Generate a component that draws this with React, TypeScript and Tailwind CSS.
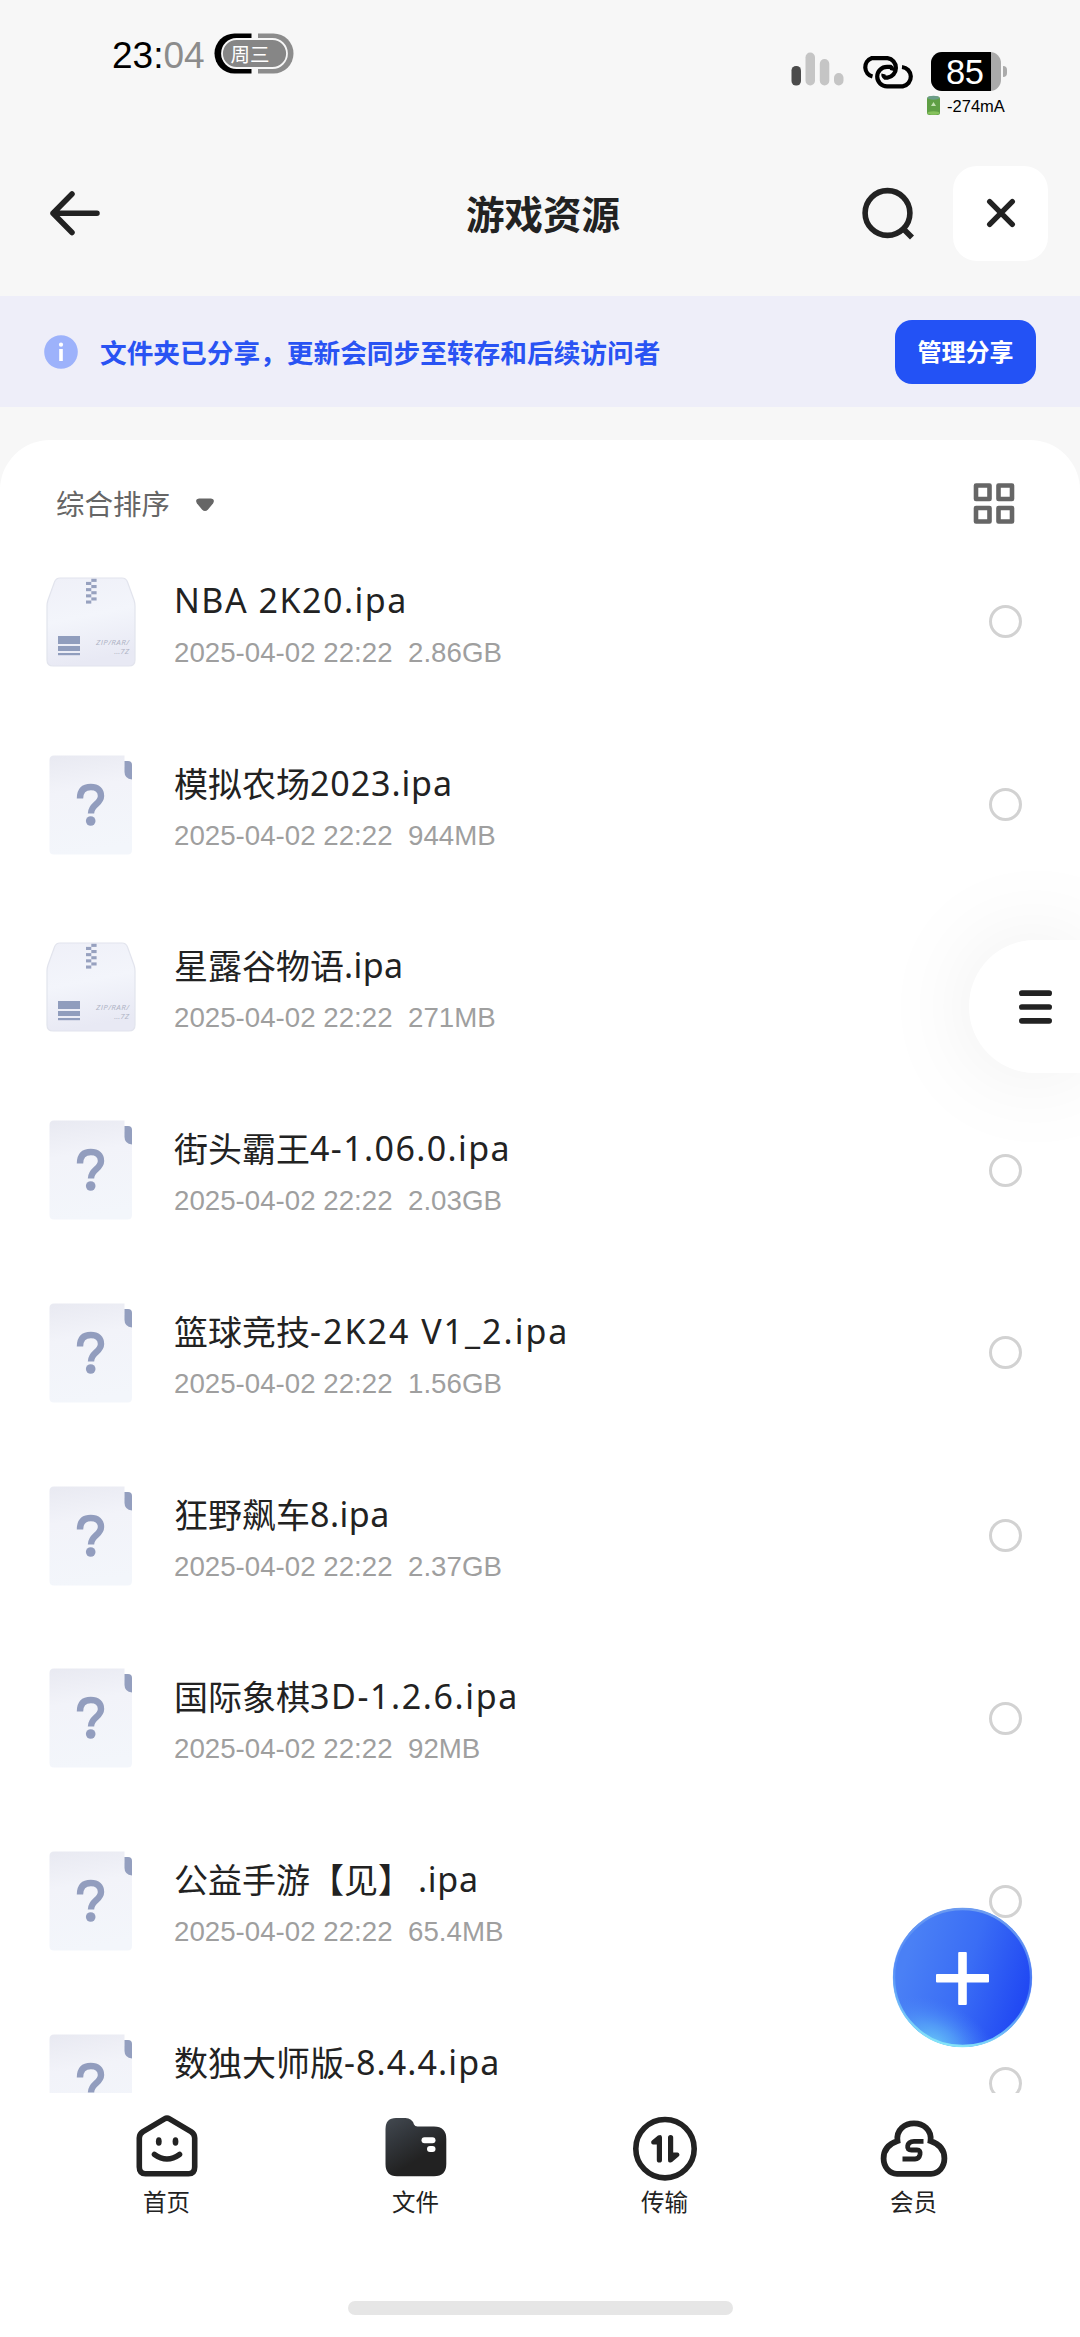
import React from "react";

type FileItem = { kind: "zip" | "unknown"; name: string; size: string; track: number; gap?: number };

const files: FileItem[] = [
  { kind: "zip", name: "NBA 2K20.ipa", size: "2.86GB", track: 1.5 },
  { kind: "unknown", name: "模拟农场2023.ipa", size: "944MB", track: 0.9 },
  { kind: "zip", name: "星露谷物语.ipa", size: "271MB", track: 0.4 },
  { kind: "unknown", name: "街头霸王4-1.06.0.ipa", size: "2.03GB", track: 1.4 },
  { kind: "unknown", name: "篮球竞技-2K24 V1_2.ipa", size: "1.56GB", track: 2 },
  { kind: "unknown", name: "狂野飙车8.ipa", size: "2.37GB", track: 0.5 },
  { kind: "unknown", name: "国际象棋3D-1.2.6.ipa", size: "92MB", track: 1.6 },
  { kind: "unknown", name: "公益手游【见】.ipa", size: "65.4MB", track: 0.7, gap: 6 },
  { kind: "unknown", name: "数独大师版-8.4.4.ipa", size: "", track: 1.1 },
];

function ZipIcon() {
  const teeth = [0, 1, 2, 3, 4, 5, 6, 7];
  return (
    <svg width="90" height="90" viewBox="0 0 90 90">
      <defs>
        <linearGradient id="zipBody" x1="0" y1="0" x2="0.2" y2="1">
          <stop offset="0" stopColor="#eff0f8" />
          <stop offset="0.5" stopColor="#f3f5fb" />
          <stop offset="1" stopColor="#e8e9f4" />
        </linearGradient>
      </defs>
      <path
        d="M14 1H76Q80 1 81.500 5L88 23Q89 26 89 29V83Q89 89 83 89H7Q1 89 1 83V29Q1 26 2 23L8.500 5Q10 1 14 1Z"
        fill="url(#zipBody)"
        stroke="#e2e4ed"
        strokeWidth="1.200"
      />
      {teeth.map((i) => (
        <rect key={i} x={i % 2 ? 40 : 45.3} y={1.8 + i * 3.1} width="5.300" height="3.100" fill="#97a1bf" />
      ))}
      <rect x="12" y="59" width="22" height="8" fill="#909dbd" />
      <rect x="12" y="69" width="22" height="5" fill="#909dbd" />
      <rect x="12" y="76" width="22" height="2.200" fill="#909dbd" />
      <text x="83" y="68" textAnchor="end" textLength="33" fontFamily="Open Sans, sans-serif" fontSize="8" fontStyle="italic" fill="#aeb3c4">
        ZIP/RAR/
      </text>
      <text x="83" y="77" textAnchor="end" fontFamily="Open Sans, sans-serif" fontSize="8" fontStyle="italic" fill="#aeb3c4">
        ...7Z
      </text>
    </svg>
  );
}

function UnknownIcon() {
  return (
    <svg width="84" height="100" viewBox="0 0 84 100">
      <defs>
        <linearGradient id="docBody" x1="0.200" y1="0" x2="0.350" y2="1">
          <stop offset="0" stopColor="#e9eaf2" />
          <stop offset="0.350" stopColor="#f2f3f9" />
          <stop offset="1" stopColor="#f3f6fb" />
        </linearGradient>
      </defs>
      <path d="M5 0.500H75.500V12H83V95Q83 99.500 78.500 99.500H5Q0.500 99.500 0.500 95V5Q0.500 0.500 5 0.500Z" fill="url(#docBody)" />
      <path d="M75.500 6H79Q83 6 83 10V24.500Q75.500 23.500 75.500 17Z" fill="#949fbf" />
      <path
        d="M31 43.500C31 35.500 35 32 41.800 32C48.500 32 52 35.500 52 41C52 49 42 49.500 42 58.500"
        fill="none"
        stroke="#929dbe"
        strokeWidth="6.400"
      />
      <circle cx="41.700" cy="66" r="4.800" fill="#929dbe" />
    </svg>
  );
}

function StatusBar() {
  return (
    <div className="flex h-[130px] shrink-0 items-start pl-[112px]">
      <div className="mt-[35px] flex h-[42px] items-center text-[37px] leading-[42px] text-black">
        <span>23:</span>
        <span className="text-[#8c8c8c]">04</span>
      </div>
      <div className="relative ml-[9px] mt-[33px] h-[41px] w-[80px]">
        <svg width="80" height="41" viewBox="0 0 80 41">
          <path d="M37.500 0.500H20.500A20 20 0 0 0 20.500 40.500H37.500Z" fill="#000" />
          <path d="M44 0.500H59.500A20 20 0 0 1 59.500 40.500H44Z" fill="#8c8c8c" />
          <rect x="8" y="6" width="65" height="29" rx="14.500" fill="#868686" stroke="#f7f7f7" strokeWidth="1.800" />
        </svg>
        <span className="absolute left-[17px] top-[5px] font-['Noto_Sans_CJK_SC',sans-serif] text-[19.500px] leading-[31px] text-white">周三</span>
      </div>
      <svg className="ml-[497px] mt-[51px]" width="54" height="36" viewBox="0 0 54 36">
        <rect x="0.500" y="15" width="9.500" height="19.500" rx="4.500" fill="#4b4b4b" />
        <rect x="14.500" y="1.500" width="9.500" height="33" rx="4.700" fill="#c5c5c5" />
        <rect x="28.800" y="8" width="9.500" height="26.500" rx="4.700" fill="#c5c5c5" />
        <rect x="43" y="22" width="9.500" height="12.500" rx="4.700" fill="#c5c5c5" />
      </svg>
      <svg className="ml-[14px] mt-[55px]" width="57" height="34" viewBox="0 0 57 34" fill="none" stroke="#000" strokeWidth="4.200">
        <path d="M13.500 21.500A9.600 9.600 0 0 1 12.500 3.200H28.500A9.800 9.800 0 0 1 28.500 22.600H26A3.500 3.500 0 0 1 24.500 19" />
        <path d="M43 12A9.800 9.800 0 0 1 43.700 31.400H28A9.800 9.800 0 0 1 28 11.800H31.500A3.500 3.500 0 0 1 33 15.500" />
      </svg>
      <div className="ml-[10px] mt-[52px] flex w-[86px] flex-col">
        <div className="flex items-center">
          <div className="ml-[5.500px] flex h-[39px] w-[70px] overflow-hidden rounded-[11px] bg-[#ababab]">
            <div className="h-full w-[60px] bg-black pl-[15px] text-[34.500px] leading-[41px] text-white">
              <span className="tracking-[-0.600px]">85</span>
            </div>
          </div>
          <div className="ml-[2px] h-[11px] w-[4px] rounded-r-full bg-[#ababab]" />
        </div>
        <div className="mt-[4px] flex items-center">
          <svg width="15" height="21" viewBox="0 0 15 21">
            <rect x="1" y="1.500" width="13" height="18.500" rx="2.500" fill="#5f9f45" />
            <ellipse cx="7.500" cy="2.700" rx="6" ry="2" fill="#6b9c88" />
            <ellipse cx="7.500" cy="18" rx="6" ry="1.700" fill="#86c25c" />
            <path d="M7.500 7L10 11H5Z" fill="#c3e2b2" />
          </svg>
          <span className="ml-[6.500px] whitespace-nowrap text-[16.500px] leading-[20px] text-black">-274mA</span>
        </div>
      </div>
    </div>
  );
}

function Header() {
  return (
    <div className="grid h-[166px] shrink-0 grid-cols-[1fr_auto_1fr] items-center">
      <div className="flex items-center pl-[48px]">
        <svg width="54" height="50" viewBox="0 0 54 50" fill="none" stroke="#222" strokeWidth="5.500" strokeLinecap="round" strokeLinejoin="round">
          <path d="M49 25.300H5M24 6L5 25.300L24 44.500" />
        </svg>
      </div>
      <div className="pb-[3px] pl-[6px] font-['Noto_Sans_CJK_SC',sans-serif] text-[38.500px] font-bold leading-[50px] text-[#222]">游戏资源</div>
      <div className="flex items-center justify-end pr-[32px]">
        <svg className="mr-[37px]" width="56" height="56" viewBox="0 0 56 56" fill="none" stroke="#222" strokeWidth="5.600">
          <circle cx="27.500" cy="28" r="22.400" />
          <path d="M43 43.500L52 52.500" />
        </svg>
        <button className="flex h-[95px] w-[95px] items-center justify-center rounded-[24px] bg-white">
          <svg width="32" height="32" viewBox="0 0 32 32" stroke="#222" strokeWidth="5.400" strokeLinecap="round">
            <path d="M4.700 4.700L27.300 27.300M27.300 4.700L4.700 27.300" />
          </svg>
        </button>
      </div>
    </div>
  );
}

function Banner() {
  return (
    <div className="flex h-[111px] shrink-0 items-center bg-[#eeeef9] pl-[44px] pr-[44px]">
      <svg width="34" height="34" viewBox="0 0 34 34">
        <circle cx="17" cy="17" r="16.800" fill="#9db2fb" />
        <circle cx="17" cy="9.700" r="2.100" fill="#fff" />
        <rect x="15.200" y="14" width="3.600" height="12" fill="#fff" />
      </svg>
      <span className="ml-[22px] flex-1 whitespace-nowrap font-['Noto_Sans_CJK_SC',sans-serif] text-[26.700px] font-bold leading-[40px] text-[#2953f3]">
        文件夹已分享，更新会同步至转存和后续访问者
      </span>
      <button className="flex h-[64px] w-[141px] items-center justify-center rounded-[17px] bg-[#2352f5] pb-[1px] font-['Noto_Sans_CJK_SC',sans-serif] text-[24px] font-bold leading-[36px] text-white">
        管理分享
      </button>
    </div>
  );
}

// Splits a name into CJK runs and Latin runs so each gets its own face and spacing.
function FileName({ file }: { file: FileItem }) {
  const runs = file.name.match(/[\u3000-\u9fff]+|[^\u3000-\u9fff]+/g) ?? [];
  return (
    <div className="flex h-[48px] items-center whitespace-pre text-[34px] text-[#222]">
      {runs.map((run, i) =>
        /[\u3000-\u9fff]/.test(run) ? (
          <span key={i} className="font-['Noto_Sans_CJK_SC',sans-serif] leading-[48px]">{run}</span>
        ) : (
          <span
            key={i}
            className="font-['Noto_Sans',sans-serif] leading-[48px]"
            style={{ letterSpacing: file.track, marginLeft: file.gap ?? 0 }}
          >
            {run}
          </span>
        )
      )}
    </div>
  );
}

function FileRow({ file }: { file: FileItem }) {
  return (
    <div className="flex h-[182.750px] shrink-0 items-center pl-[46px] pr-[58px]">
      <div className="flex w-[90px] justify-center">{file.kind === "zip" ? <ZipIcon /> : <UnknownIcon />}</div>
      <div className="ml-[38px] flex flex-1 flex-col pt-[2px]">
        <FileName file={file} />
        <div className="mt-[12px] h-[34px] whitespace-pre text-[27.700px] leading-[34px] text-[#9f9f9f]">
          {file.size && "2025-04-02 22:22  " + file.size}
        </div>
      </div>
      <div className="h-[33px] w-[33px] rounded-full border-[3px] border-[#d2d2d2]" />
    </div>
  );
}

const HomeIcon = () => (
  <svg width="66" height="66" viewBox="0 0 66 66" fill="none" stroke="#222" strokeWidth="5.600" strokeLinecap="round" strokeLinejoin="round">
    <path d="M30.500 5.800Q33 4.300 35.500 5.800L57 18.600Q60.700 21 60.700 25V54Q60.700 60.700 54.500 60.700H11.500Q5.300 60.700 5.300 54V25Q5.300 21 9 18.600Z" />
    <path d="M20.500 41.500Q33 50.500 45.500 41.500" />
    <ellipse cx="24.800" cy="28.500" rx="2.900" ry="4.300" fill="#222" stroke="none" />
    <ellipse cx="41.500" cy="28.500" rx="2.900" ry="4.300" fill="#222" stroke="none" />
  </svg>
);

const FolderIcon = () => (
  <svg width="66" height="66" viewBox="0 0 66 66">
    <defs>
      <linearGradient id="folderBody" x1="0.100" y1="0" x2="0.550" y2="0.700">
        <stop offset="0" stopColor="#41474e" />
        <stop offset="0.450" stopColor="#32363b" />
        <stop offset="1" stopColor="#222" />
      </linearGradient>
    </defs>
    <path
      d="M13 5H22.500Q29 5 31 11.500Q32 13.500 34.500 13.500H51Q63.300 13.500 63.300 26V51Q63.300 63.300 51 63.300H14Q2.500 63.300 2.500 51V16Q2.500 5 13 5Z"
      fill="url(#folderBody)"
    />
    <rect x="38.500" y="24.300" width="14" height="6" rx="3" fill="#fff" />
    <rect x="44" y="33" width="8.500" height="6" rx="3" fill="#fff" />
  </svg>
);

const TransferIcon = () => (
  <svg className="overflow-visible" width="66" height="66" viewBox="0 0 66 66">
    <circle cx="33" cy="35.700" r="29.200" fill="none" stroke="#222" strokeWidth="5.600" />
    <path d="M30 24.500V47A2.600 2.600 0 0 1 24.800 47V31.500H21A2.200 2.200 0 0 1 20 27.600L26 22.600Q30 20.500 30 24.500Z" fill="#222" />
    <path d="M36 47V24.500A2.600 2.600 0 0 1 41.200 24.500V39.500H45.500A2.200 2.200 0 0 1 46.500 43.500L40 48.900Q36 51 36 47Z" fill="#222" />
  </svg>
);

const CloudIcon = () => (
  <svg width="68" height="66" viewBox="0 0 68 66">
    <path
      d="M17.500 28C14.500 4.500 53.500 4.500 50.500 28C58 30.500 64.400 36 64.400 45.500C64.400 54 58.500 60.800 51 60.800H17C9.500 60.800 3.600 54 3.600 45.500C3.600 36 10 30.500 17.500 28Z"
      fill="none"
      stroke="#222"
      strokeWidth="5.800"
    />
    <path d="M43.500 28.400H34Q28.500 28.400 27.700 33Q27 37 31.500 37H37Q40.800 37 40 41.500Q39 46 35 46H22.500" fill="none" stroke="#222" strokeWidth="4.800" />
  </svg>
);

const tabs = [
  { label: "首页", icon: <HomeIcon /> },
  { label: "文件", icon: <FolderIcon /> },
  { label: "传输", icon: <TransferIcon /> },
  { label: "会员", icon: <CloudIcon /> },
];

export default function App() {
  return (
    <div className="relative flex h-[2337px] w-[1080px] flex-col overflow-hidden bg-[#f7f7f7] font-['Liberation_Sans',sans-serif]">
      <StatusBar />
      <Header />
      <Banner />
      <main className="mt-[33px] flex h-[1653px] shrink-0 flex-col overflow-hidden rounded-t-[50px] bg-white">
        <div className="flex h-[90.500px] shrink-0 items-center justify-between pl-[56px] pr-[65px] pt-[36px]">
          <div className="flex items-center">
            <span className="font-['Noto_Sans_CJK_SC',sans-serif] text-[28.500px] leading-[42px] text-[#666]">综合排序</span>
            <svg className="ml-[25px] mt-[3px]" width="20" height="16" viewBox="0 0 20 16">
              <path d="M4 1.500H16Q20.500 2 18 6.500L13 12.500Q10 15.500 7 12.500L2 6.500Q-0.500 2 4 1.500Z" fill="#666" />
            </svg>
          </div>
          <svg width="42" height="42" viewBox="0 0 42 42" fill="none" stroke="#666" strokeWidth="4.600" strokeLinejoin="round">
            <rect x="3" y="3.500" width="13.500" height="13.500" />
            <rect x="25.500" y="3.500" width="13.500" height="13.500" />
            <rect x="3" y="26" width="13.500" height="13.500" />
            <rect x="25.500" y="26" width="13.500" height="13.500" />
          </svg>
        </div>
        {files.map((file) => (
          <FileRow key={file.name} file={file} />
        ))}
      </main>
      <nav className="flex flex-1 flex-col items-center bg-white">
        <div className="flex w-full px-[42px] pt-[20px]">
          {tabs.map((tab) => (
            <div key={tab.label} className="flex flex-1 flex-col items-center">
              {tab.icon}
              <span className="mt-[4px] font-['Noto_Sans_CJK_SC',sans-serif] text-[23.500px] leading-[36px] text-[#222]">{tab.label}</span>
            </div>
          ))}
        </div>
        <div className="mb-[22px] mt-auto h-[14px] w-[385px] rounded-full bg-[#e6e6e6]" />
      </nav>

      <button className="absolute right-0 top-[940px] flex h-[133px] w-[111px] items-center rounded-l-[66px] bg-white pl-[50px] shadow-[0_0_100px_rgba(0,0,0,0.080)]">
        <svg width="33" height="34" viewBox="0 0 33 34" fill="#222">
          <rect x="0" y="0.300" width="33" height="5.700" rx="2.850" />
          <rect x="0" y="14.150" width="33" height="5.700" rx="2.850" />
          <rect x="0" y="28" width="33" height="5.700" rx="2.850" />
        </svg>
      </button>

      <button className="absolute left-[892px] top-[1907px] h-[141px] w-[141px]">
        <svg width="141" height="141" viewBox="0 0 141 141">
          <defs>
            <linearGradient id="fabBase" x1="0.100" y1="0.350" x2="0.950" y2="0.620">
              <stop offset="0" stopColor="#4a80f5" />
              <stop offset="0.500" stopColor="#3a6df5" />
              <stop offset="1" stopColor="#2149f3" />
            </linearGradient>
            <radialGradient
              id="fabGlow"
              gradientUnits="userSpaceOnUse"
              cx="0"
              cy="0"
              r="1"
              gradientTransform="translate(42 136) rotate(24) scale(66 42)"
            >
              <stop offset="0" stopColor="#66c4f8" />
              <stop offset="0.400" stopColor="#5cb0f8" stopOpacity="0.650" />
              <stop offset="1" stopColor="#4a86f8" stopOpacity="0" />
            </radialGradient>
            <linearGradient id="fabRim" x1="0.600" y1="0" x2="0.400" y2="1">
              <stop offset="0" stopColor="#6d9cf0" />
              <stop offset="0.500" stopColor="#5c93f8" stopOpacity="0.600" />
              <stop offset="1" stopColor="#86e6f8" />
            </linearGradient>
          </defs>
          <circle cx="70.500" cy="70.500" r="69.500" fill="url(#fabBase)" />
          <circle cx="70.500" cy="70.500" r="69.500" fill="url(#fabGlow)" />
          <circle cx="70.500" cy="70.500" r="68.500" fill="none" stroke="url(#fabRim)" strokeWidth="2.400" />
          <rect x="44" y="67" width="53" height="8.600" rx="1" fill="#fff" />
          <rect x="66.200" y="45" width="8.600" height="53" rx="1" fill="#fff" />
        </svg>
      </button>
    </div>
  );
}
